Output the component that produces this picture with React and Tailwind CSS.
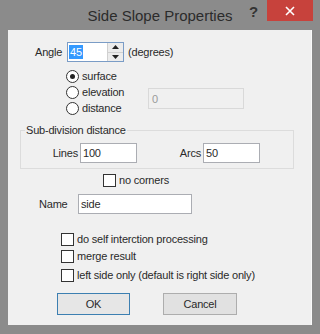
import React from 'react';

const font = { fontFamily: '"Liberation Sans", Arial, sans-serif' };

const Radio = ({ checked, label }) => (
  <div className="flex items-center h-[16px]">
    <span className="w-[13px] h-[13px] rounded-full border border-[#333] bg-white flex items-center justify-center">
      {checked && <span className="w-[5px] h-[5px] rounded-full bg-[#222]"></span>}
    </span>
    <span className="ml-[3px]">{label}</span>
  </div>
);

const Check = ({ label, className = '' }) => (
  <div className={`flex items-center h-[14px] ${className}`}>
    <span className="w-[13px] h-[13px] border border-[#333] bg-white"></span>
    <span className="ml-[3px]">{label}</span>
  </div>
);

const Input = ({ value, className = '' }) => (
  <div className={`h-[20px] border border-[#abadb3] bg-white flex items-center px-[2px] ${className}`}>
    {value}
  </div>
);

export default function App() {
  return (
    <div className="w-[320px] h-[334px] bg-[#8b8b8b] flex flex-col text-[11px] leading-[14px] tracking-[-0.2px] text-[#2a2a2a]" style={font}>
      {/* title bar */}
      <div className="h-[30px] flex items-start relative">
        <div className="flex-1 text-center pt-[6px] text-[15px] leading-[20px] tracking-normal text-[#2b2b2b]">
          Side Slope Properties
        </div>
        <div className="absolute left-[249px] top-[3px] text-[15px] leading-[18px] font-bold text-[#333]">?</div>
        <div className="absolute right-[7px] top-0 w-[46px] h-[21px] bg-[#c7423c] flex items-center justify-center">
          <svg width="10" height="10" viewBox="0 0 10 10">
            <path d="M1 1 L9 9 M9 1 L1 9" stroke="#fff" strokeWidth="1.6" />
          </svg>
        </div>
      </div>

      {/* client area */}
      <div className="ml-[8px] w-[304px] h-[295px] bg-[#f0f0f0] border-r border-[#fafafa] flex flex-col">
        {/* angle */}
        <div className="flex items-center mt-[12px] ml-[27px] h-[20px]">
          <span className="w-[32px]">Angle</span>
          <div className="w-[57px] h-[20px] border border-[#7a9cc6] bg-white flex">
            <div className="flex-1 flex items-center pl-[1px]">
              <span className="bg-[#3399ff] text-white px-[1px] leading-[14px]">45</span>
            </div>
            <div className="w-[16px] flex flex-col border-l border-[#d0d0d0]">
              <div className="flex-1 flex items-center justify-center bg-[#ececec] border-b border-[#d0d0d0]">
                <svg width="7" height="4" viewBox="0 0 7 4"><path d="M0 4 L3.5 0 L7 4 Z" fill="#222" /></svg>
              </div>
              <div className="flex-1 flex items-center justify-center bg-[#ececec]">
                <svg width="7" height="4" viewBox="0 0 7 4"><path d="M0 0 L3.5 4 L7 0 Z" fill="#222" /></svg>
              </div>
            </div>
          </div>
          <span className="ml-[4px]">(degrees)</span>
        </div>

        {/* radios */}
        <div className="flex mt-[6px] ml-[58px]">
          <div className="flex flex-col w-[64px]">
            <Radio checked label="surface" />
            <Radio label="elevation" />
            <Radio label="distance" />
          </div>
          <div className="ml-[18px] mt-[20px] w-[96px] h-[21px] border border-[#d9d9d9] bg-[#f0f0f0] flex items-center px-[3px] text-[#9a9a9a]">
            0
          </div>
        </div>

        {/* group */}
        <div className="relative mt-[14px] ml-[12px] w-[274px] h-[39px] border border-[#dcdcdc]">
          <div className="absolute left-[4px] -top-[8px] bg-[#f0f0f0] px-[1px]">Sub-division distance</div>
          <div className="flex items-center mt-[12px]">
            <span className="ml-[19px] w-[38px] text-right">Lines</span>
            <Input value="100" className="ml-[2px] w-[57px]" />
            <span className="w-[64px] text-right">Arcs</span>
            <Input value="50" className="ml-[2px] w-[57px]" />
          </div>
        </div>

        <Check label="no corners" className="mt-[4px] ml-[95px]" />

        {/* name */}
        <div className="flex items-center mt-[7px] ml-[31px]">
          <span className="w-[39px]">Name</span>
          <Input value="side" className="w-[114px]" />
        </div>

        {/* options */}
        <div className="flex flex-col mt-[18px] ml-[53px] gap-[3px]">
          <Check label="do self interction processing" />
          <Check label="merge result" />
          <Check label="left side only (default is right side only)" className="mt-[2px]" />
        </div>

        {/* buttons */}
        <div className="flex mt-[11px] ml-[49px] gap-[33px]">
          <div className="w-[73px] h-[22px] border border-[#3c7fb1] bg-[#e6e6e6] flex items-center justify-center">OK</div>
          <div className="w-[74px] h-[22px] border border-[#adadad] bg-[#e1e1e1] flex items-center justify-center">Cancel</div>
        </div>
      </div>
    </div>
  );
}
